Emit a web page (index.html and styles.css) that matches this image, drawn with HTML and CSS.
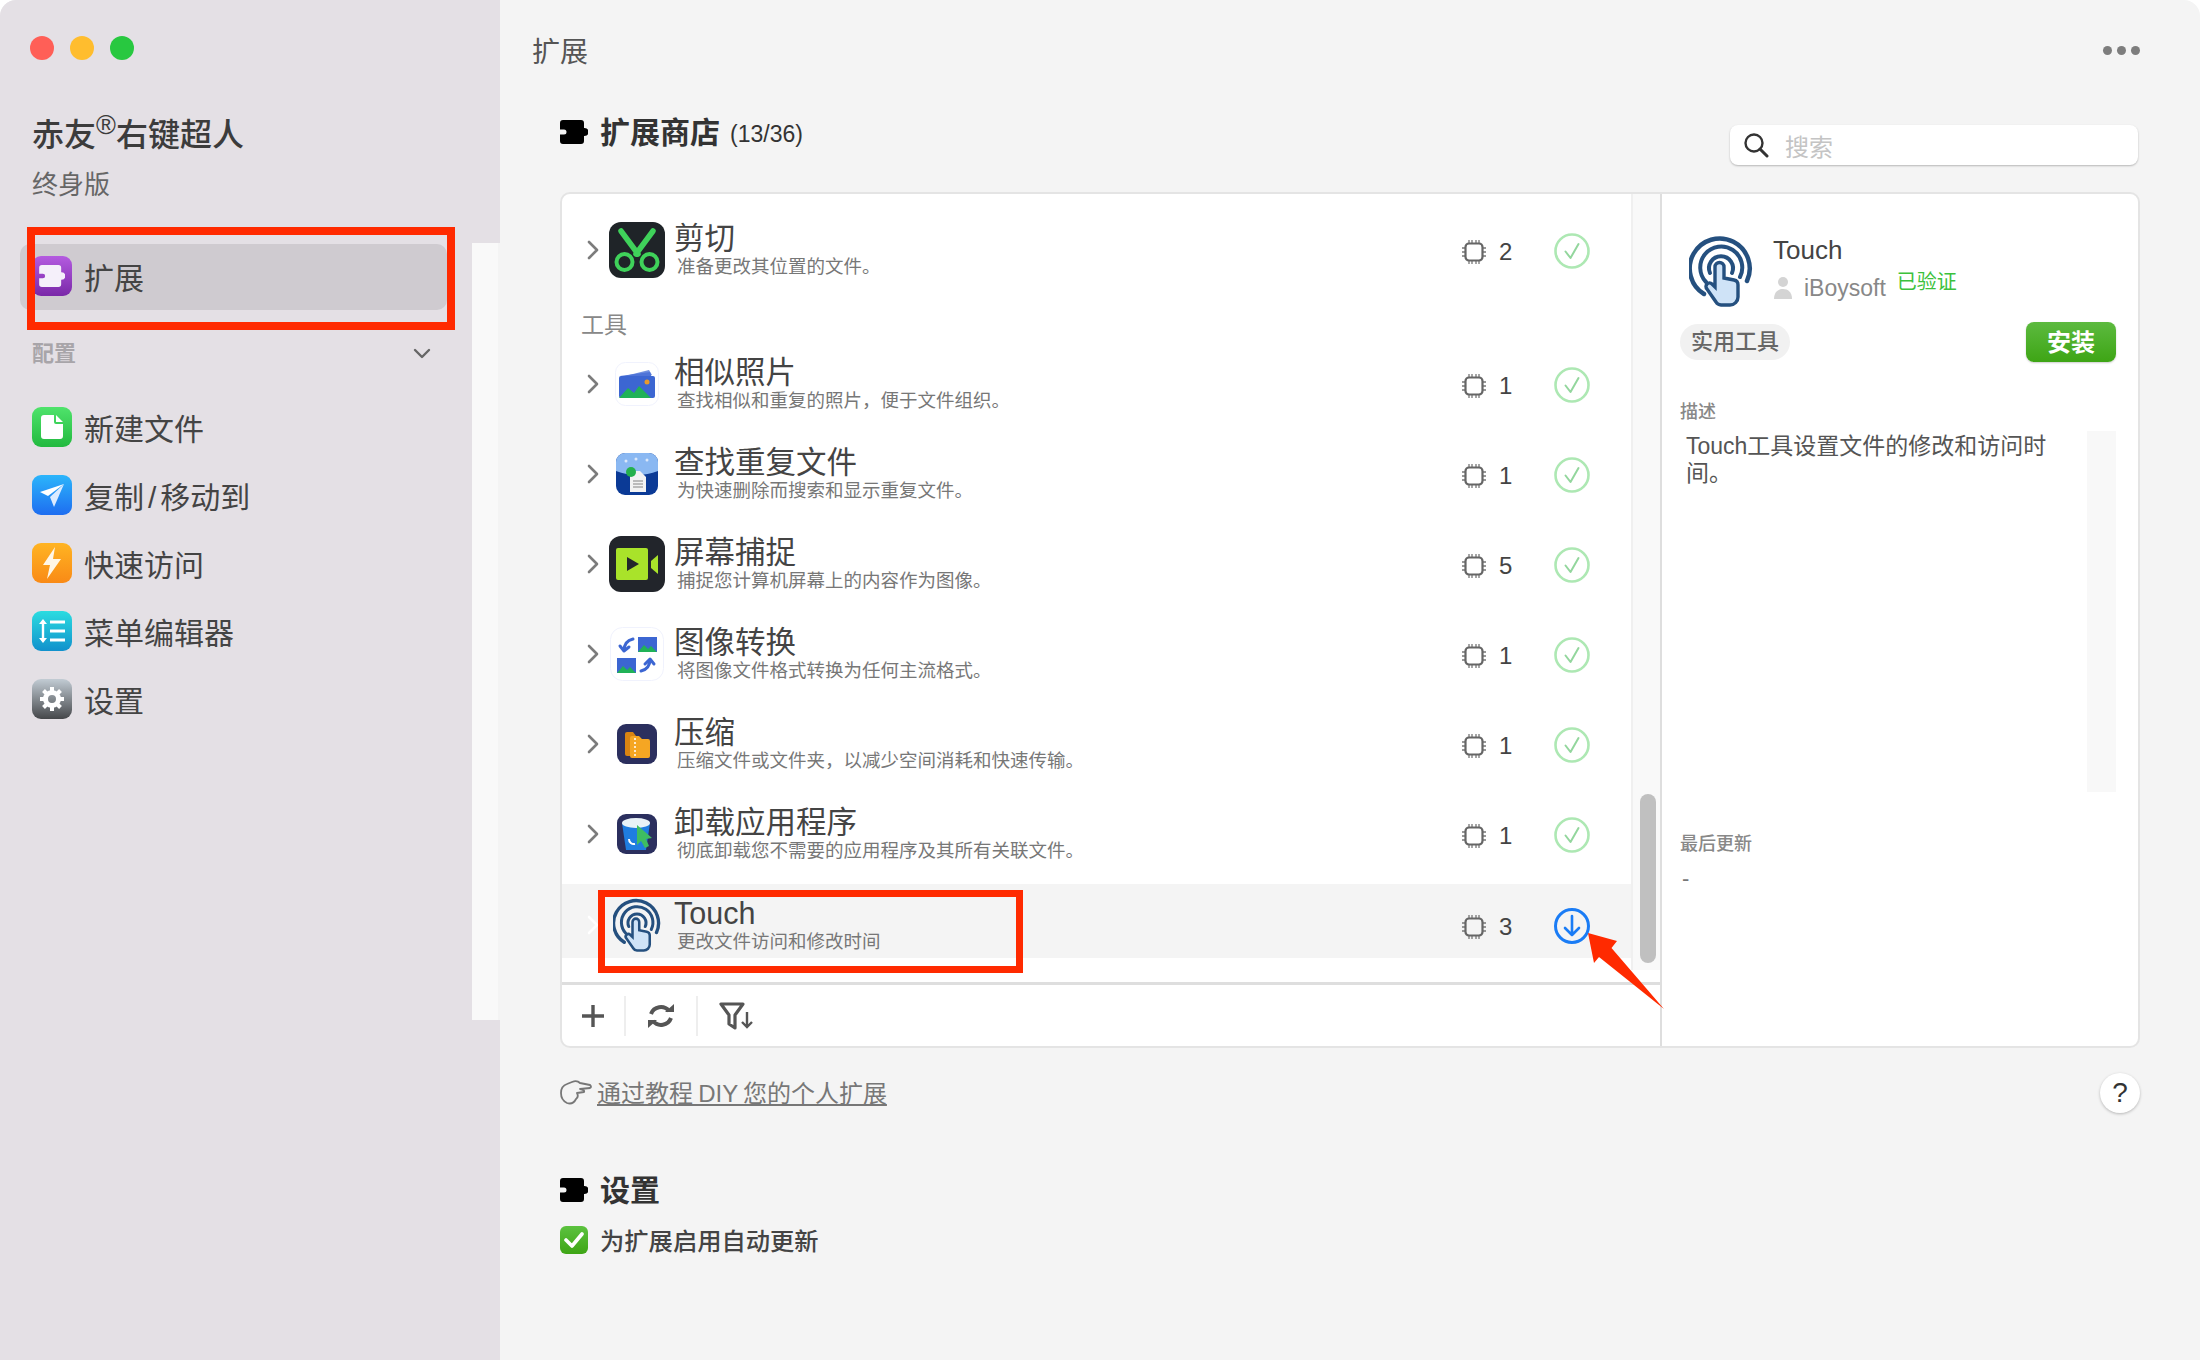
FILE: index.html
```html
<!DOCTYPE html>
<html>
<head>
<meta charset="utf-8">
<title>赤友右键超人</title>
<link rel="stylesheet" href="styles.css">
</head>
<body>

<svg class="sprite">
  <symbol id="puzzle" viewBox="0 0 28 24">
    <path d="M3 0H21a3 3 0 0 1 3 3V8h.5a4 4 0 0 1 0 8H24v5a3 3 0 0 1-3 3H3a3 3 0 0 1-3-3V14.500h4a2.500 2.500 0 0 0 0-5H0V3a3 3 0 0 1 3-3z"/>
  </symbol>
  <symbol id="chevron" viewBox="0 0 12 20">
    <path d="M2 2l8 8-8 8" fill="none" stroke="currentColor" stroke-width="2.600" stroke-linecap="round" stroke-linejoin="round"/>
  </symbol>
  <symbol id="chip" viewBox="0 0 24 24">
    <path d="M7 0v4M10 0v4M14 0v4M17 0v4M7 20v4M10 20v4M14 20v4M17 20v4M0 8h4M0 12h4M0 16h4M20 8h4M20 12h4M20 16h4" stroke="#777" stroke-width="1.300"/>
    <rect x="3.500" y="3.500" width="17" height="17" rx="3.500" fill="#fff" fill-opacity="0" stroke="#666" stroke-width="2.200"/>
  </symbol>
  <symbol id="done" viewBox="0 0 36 36">
    <circle cx="18" cy="18" r="16.500" fill="none" stroke="#ade8b3" stroke-width="2.600"/>
    <path d="M11.500 18.500l5 6.500 8-14" fill="none" stroke="#93d69d" stroke-width="2" stroke-linecap="round" stroke-linejoin="round"/>
  </symbol>
  <symbol id="touch" viewBox="0 0 64 72">
    <g fill="none" stroke="#25507f" stroke-linecap="round">
      <path d="M15 59A30 30 0 1 1 58 46" stroke-width="4.500"/>
      <path d="M17 47A21 21 0 1 1 51 42" stroke-width="4"/>
      <path d="M21 38A12 12 0 1 1 43 38" stroke-width="4"/>
    </g>
    <path d="M26 32a4.500 4.500 0 0 1 9 0V43l10 2a5 5 0 0 1 4 5V62a8 8 0 0 1-8 8H32a6 6 0 0 1-5-3L18 54a3.500 3.500 0 0 1 5-5l3 3z" fill="#cfe3f7" stroke="#25507f" stroke-width="3.400"/>
  </symbol>
</svg>

<div class="window">

  <aside class="sidebar">
    <div class="side-col">
      <div class="lights">
        <span class="light red"></span>
        <span class="light yellow"></span>
        <span class="light green"></span>
      </div>
      <h1 class="app-name">赤友<sup>®</sup>右键超人</h1>
      <div class="app-plan">终身版</div>

      <div class="nav-item active">
        <span class="tile tile-purple">
          <svg width="26" height="22" fill="#f5f0fa"><use href="#puzzle"/></svg>
        </span>
        扩展
      </div>

      <div class="nav-label">
        配置
        <svg width="18" height="12" viewBox="0 0 18 12"><path d="M2 2l7 7 7-7" fill="none" stroke="#666" stroke-width="2.400" stroke-linecap="round" stroke-linejoin="round"/></svg>
      </div>

      <nav class="nav-list">
        <div class="nav-item">
          <span class="tile tile-green">
            <svg width="22" height="24" viewBox="0 0 22 24"><path d="M3 0H13V7a2 2 0 0 0 2 2h7V21a3 3 0 0 1-3 3H3a3 3 0 0 1-3-3V3a3 3 0 0 1 3-3zM15 0l7 7h-7z" fill="#fff"/></svg>
          </span>
          新建文件
        </div>
        <div class="nav-item">
          <span class="tile tile-blue">
            <svg width="26" height="24" viewBox="0 0 26 24"><path d="M25 1L1 9l8 4z" fill="#fff"/><path d="M25 1L11 14l4 10z" fill="#dcebff"/></svg>
          </span>
          <span>复制<span class="slash">/</span>移动到</span>
        </div>
        <div class="nav-item">
          <span class="tile tile-orange">
            <svg width="20" height="32" viewBox="0 0 20 32"><path d="M13 0L1 18h7l-3 14L19 12h-8z" fill="#fff6e6"/></svg>
          </span>
          快速访问
        </div>
        <div class="nav-item">
          <span class="tile tile-teal">
            <svg width="28" height="28" viewBox="0 0 28 28"><path d="M5 2l4 5H1zM5 26l4-5H1z" fill="#fff"/><path d="M5 6v16" stroke="#fff" stroke-width="2.400"/><path d="M12 5h15M12 14h15M12 23h15" stroke="#fff" stroke-width="3"/></svg>
          </span>
          菜单编辑器
        </div>
        <div class="nav-item">
          <span class="tile tile-gray">
            <svg width="26" height="26" viewBox="0 0 26 26"><circle cx="13" cy="13" r="6.500" fill="none" stroke="#fff" stroke-width="5"/><path d="M13 1v5M13 20v5M1 13h5M20 13h5M4.500 4.500l3.500 3.500M18 18l3.500 3.500M21.500 4.500L18 8M8 18l-3.500 3.500" stroke="#fff" stroke-width="4"/></svg>
          </span>
          设置
        </div>
      </nav>
    </div>
    <div class="side-strip"></div>
  </aside>

  <main class="main">
    <header class="topbar">
      <span class="topbar-title">扩展</span>
      <span class="dots"><i></i><i></i><i></i></span>
    </header>

    <div class="content">
      <div class="store-head">
        <h2 class="heading">
          <svg width="28" height="24"><use href="#puzzle"/></svg>
          <span class="heading-text">扩展商店 <small>(13/36)</small></span>
        </h2>
        <div class="search">
          <svg width="26" height="26" viewBox="0 0 26 26"><circle cx="11" cy="11" r="8.500" fill="none" stroke="#333" stroke-width="2.400"/><path d="M17 17l7 7" stroke="#333" stroke-width="3" stroke-linecap="round"/></svg>
          <span>搜索</span>
        </div>
      </div>

      <section class="panel">
        <div class="panel-left">
          <div class="list-wrap">
            <div class="list">

              <div class="row">
                <svg class="chev" width="12" height="20"><use href="#chevron"/></svg>
                <span class="slot">
                  <svg width="56" height="56" viewBox="0 0 56 56">
                    <rect width="56" height="56" rx="12" fill="#1f2428"/>
                    <g fill="none" stroke="#3fd25a">
                      <circle cx="15.500" cy="40" r="8" stroke-width="4"/>
                      <circle cx="40.500" cy="40" r="8" stroke-width="4"/>
                      <path d="M12 9l17 23M44 9L27 32" stroke-width="5.500" stroke-linecap="round"/>
                    </g>
                  </svg>
                </span>
                <div class="row-text">
                  <div class="row-title">剪切</div>
                  <div class="row-sub">准备更改其位置的文件。</div>
                </div>
                <div class="row-count"><svg width="24" height="24"><use href="#chip"/></svg>2</div>
                <svg class="status" width="36" height="36"><use href="#done"/></svg>
              </div>

              <div class="group-label">工具</div>

              <div class="row">
                <svg class="chev" width="12" height="20"><use href="#chevron"/></svg>
                <span class="slot">
                  <svg width="44" height="44" viewBox="0 0 44 44">
                    <rect x=".5" y=".5" width="43" height="43" rx="10" fill="#fff" stroke="#f0f2fd"/>
                    <path d="M6 15l28-7 3 5z" fill="#6f8fe0"/>
                    <path d="M5 14l30-4 2 6z" fill="#4f74d8"/>
                    <rect x="4" y="14" width="36" height="22" rx="2" fill="#3c66d2"/>
                    <circle cx="32" cy="20" r="2.500" fill="#e89a2b"/>
                    <path d="M4 36l9-10 6 5 5-7 12 12z" fill="#20b257"/>
                  </svg>
                </span>
                <div class="row-text">
                  <div class="row-title">相似照片</div>
                  <div class="row-sub">查找相似和重复的照片，便于文件组织。</div>
                </div>
                <div class="row-count"><svg width="24" height="24"><use href="#chip"/></svg>1</div>
                <svg class="status" width="36" height="36"><use href="#done"/></svg>
              </div>

              <div class="row">
                <svg class="chev" width="12" height="20"><use href="#chevron"/></svg>
                <span class="slot">
                  <svg width="42" height="42" viewBox="0 0 42 42">
                    <rect width="42" height="42" rx="9" fill="#0b3a96"/>
                    <path d="M0 9a9 9 0 0 1 9-9H33a9 9 0 0 1 9 9V18q-21 8-42 0z" fill="#8ab8f2"/>
                    <path d="M14 18h10l6 6V39H14z" fill="#f2f2f2"/>
                    <path d="M17 28h10M17 31h10M17 34h10" stroke="#a9a9a9" stroke-width="1.500"/>
                    <circle cx="15" cy="19" r="5" fill="#24b14d"/>
                    <circle cx="10" cy="8" r="1.500" fill="#dbe8fa"/>
                    <circle cx="20" cy="6" r="1.500" fill="#dbe8fa"/>
                    <circle cx="31" cy="7" r="1.500" fill="#dbe8fa"/>
                  </svg>
                </span>
                <div class="row-text">
                  <div class="row-title">查找重复文件</div>
                  <div class="row-sub">为快速删除而搜索和显示重复文件。</div>
                </div>
                <div class="row-count"><svg width="24" height="24"><use href="#chip"/></svg>1</div>
                <svg class="status" width="36" height="36"><use href="#done"/></svg>
              </div>

              <div class="row">
                <svg class="chev" width="12" height="20"><use href="#chevron"/></svg>
                <span class="slot">
                  <svg width="56" height="56" viewBox="0 0 56 56">
                    <rect width="56" height="56" rx="12" fill="#22252b"/>
                    <rect x="7" y="12" width="32" height="32" rx="2" fill="#a9e32a"/>
                    <path d="M18 21l12 7-12 7z" fill="#22252b"/>
                    <path d="M42 25l7-6V38l-7-6z" fill="#a9e32a"/>
                  </svg>
                </span>
                <div class="row-text">
                  <div class="row-title">屏幕捕捉</div>
                  <div class="row-sub">捕捉您计算机屏幕上的内容作为图像。</div>
                </div>
                <div class="row-count"><svg width="24" height="24"><use href="#chip"/></svg>5</div>
                <svg class="status" width="36" height="36"><use href="#done"/></svg>
              </div>

              <div class="row">
                <svg class="chev" width="12" height="20"><use href="#chevron"/></svg>
                <span class="slot">
                  <svg width="54" height="54" viewBox="0 0 54 54">
                    <rect x=".5" y=".5" width="53" height="53" rx="12" fill="#fff" stroke="#f0f2fd"/>
                    <rect x="28" y="10" width="19" height="15" fill="#3c66d2"/>
                    <path d="M28 25l6-7 4 4 3-3 6 6z" fill="#20b257"/>
                    <rect x="7" y="31" width="19" height="15" fill="#3c66d2"/>
                    <path d="M7 46l6-7 4 4 3-3 6 6z" fill="#20b257"/>
                    <g fill="none" stroke="#3c66d2" stroke-width="3" stroke-linecap="round" stroke-linejoin="round">
                      <path d="M23 12q-9 2-9 12M10 19l4 5 5-4"/>
                      <path d="M31 44q9-2 9-12M35 37l5-5 4 5"/>
                    </g>
                  </svg>
                </span>
                <div class="row-text">
                  <div class="row-title">图像转换</div>
                  <div class="row-sub">将图像文件格式转换为任何主流格式。</div>
                </div>
                <div class="row-count"><svg width="24" height="24"><use href="#chip"/></svg>1</div>
                <svg class="status" width="36" height="36"><use href="#done"/></svg>
              </div>

              <div class="row">
                <svg class="chev" width="12" height="20"><use href="#chevron"/></svg>
                <span class="slot">
                  <svg width="40" height="40" viewBox="0 0 40 40">
                    <rect width="40" height="40" rx="9" fill="#2b2f5e"/>
                    <path d="M8 10a2 2 0 0 1 2-2h6l3 4v20H10a2 2 0 0 1-2-2z" fill="#d98412"/>
                    <path d="M13 14a2 2 0 0 1 2-2h7l3 3h6a2 2 0 0 1 2 2V32a2 2 0 0 1-2 2H15a2 2 0 0 1-2-2z" fill="#f5a623"/>
                    <path d="M18 14v18" stroke="#fff" stroke-width="1.500" stroke-dasharray="2 2"/>
                  </svg>
                </span>
                <div class="row-text">
                  <div class="row-title">压缩</div>
                  <div class="row-sub">压缩文件或文件夹，以减少空间消耗和快速传输。</div>
                </div>
                <div class="row-count"><svg width="24" height="24"><use href="#chip"/></svg>1</div>
                <svg class="status" width="36" height="36"><use href="#done"/></svg>
              </div>

              <div class="row">
                <svg class="chev" width="12" height="20"><use href="#chevron"/></svg>
                <span class="slot">
                  <svg width="40" height="40" viewBox="0 0 40 40">
                    <rect width="40" height="40" rx="9" fill="#2b2f5e"/>
                    <path d="M5 9h28l-4 27H9z" fill="#1f7de0"/>
                    <ellipse cx="19" cy="9" rx="14" ry="5" fill="#e9f2f7"/>
                    <path d="M20 11l15 13-6 1 3 7-4 2-4-7-4 4z" fill="#3ebd62"/>
                    <path d="M12 25a5 5 0 0 0 6 5" fill="none" stroke="#fff" stroke-width="2"/>
                  </svg>
                </span>
                <div class="row-text">
                  <div class="row-title">卸载应用程序</div>
                  <div class="row-sub">彻底卸载您不需要的应用程序及其所有关联文件。</div>
                </div>
                <div class="row-count"><svg width="24" height="24"><use href="#chip"/></svg>1</div>
                <svg class="status" width="36" height="36"><use href="#done"/></svg>
              </div>

              <div class="row selected">
                <svg class="chev" width="12" height="20"><use href="#chevron"/></svg>
                <span class="slot">
                  <svg width="48" height="54"><use href="#touch"/></svg>
                </span>
                <div class="row-text">
                  <div class="row-title">Touch</div>
                  <div class="row-sub">更改文件访问和修改时间</div>
                </div>
                <div class="row-count"><svg width="24" height="24"><use href="#chip"/></svg>3</div>
                <svg class="status" width="36" height="36" viewBox="0 0 36 36">
                  <circle cx="18" cy="18" r="16.500" fill="none" stroke="#1a7cf5" stroke-width="3"/>
                  <path d="M18 8V27M11 20l7 7 7-7" fill="none" stroke="#1a7cf5" stroke-width="2.600" stroke-linecap="round" stroke-linejoin="round"/>
                </svg>
              </div>

            </div>
            <div class="scroll-track"><div class="scroll-thumb"></div></div>
          </div>

          <div class="list-foot">
            <button class="tool">
              <svg width="26" height="26" viewBox="0 0 26 26"><path d="M13 2V24M2 13H24" stroke="#555" stroke-width="3.400"/></svg>
            </button>
            <button class="tool tool-mid">
              <svg width="30" height="28" viewBox="0 0 30 28">
                <g fill="none" stroke="#555" stroke-width="4"><path d="M5 12A10.500 10.500 0 0 1 23 9"/><path d="M25 16A10.500 10.500 0 0 1 7 19"/></g>
                <path d="M19 10h9V2zM11 18H2v8z" fill="#555"/>
              </svg>
            </button>
            <button class="tool tool-last">
              <svg width="36" height="28" viewBox="0 0 36 28">
                <path d="M2 2H24L16 13V26L10 22V13z" fill="none" stroke="#555" stroke-width="3.200" stroke-linejoin="round"/>
                <path d="M28 10V25M23 20l5 5 5-5" fill="none" stroke="#555" stroke-width="2.400"/>
              </svg>
            </button>
          </div>
        </div>

        <div class="details">
          <div class="det-head">
            <svg width="64" height="72"><use href="#touch"/></svg>
            <div>
              <div class="det-name">Touch</div>
              <div class="det-meta">
                <svg width="20" height="24" viewBox="0 0 20 24"><circle cx="10" cy="6" r="5" fill="#d4d4d4"/><path d="M1 23c0-7 4-10 9-10s9 3 9 10z" fill="#d4d4d4"/></svg>
                <span class="det-author">iBoysoft</span>
                <span class="det-verified">已验证</span>
              </div>
            </div>
          </div>
          <div class="det-actions">
            <span class="tag">实用工具</span>
            <button class="install">安装</button>
          </div>
          <div class="det-label first">描述</div>
          <div class="det-desc">
            <p>Touch工具设置文件的修改和访问时间。</p>
            <div class="desc-track"></div>
          </div>
          <div class="det-label last-update">最后更新</div>
          <div class="det-value">-</div>
        </div>
      </section>

      <div class="link-row">
        <svg width="32" height="26" viewBox="0 0 32 26" fill="none" stroke="#777" stroke-width="1.800" stroke-linecap="round" stroke-linejoin="round">
          <path d="M12 2Q17 0 20 3L30 5Q32 7 30 8L20 9Q25 10 24 12L17 13Q19 17 16 19Q13 25 7 23Q1 20 1 13Q1 6 7 4L12 2"/>
        </svg>
        <a class="tutorial" href="#">通过教程 DIY 您的个人扩展</a>
        <button class="help">?</button>
      </div>

      <h2 class="heading settings-head">
        <svg width="28" height="24"><use href="#puzzle"/></svg>
        <span class="heading-text">设置</span>
      </h2>
      <label class="auto-update">
        <span class="check">
          <svg width="20" height="18" viewBox="0 0 20 18"><path d="M2 9l6 6L18 3" fill="none" stroke="#fff" stroke-width="3.600" stroke-linecap="round" stroke-linejoin="round"/></svg>
        </span>
        <span class="auto-text">为扩展启用自动更新</span>
      </label>
    </div>
  </main>

  <!-- red annotations drawn on top of the screenshot -->
  <div class="mark mark-nav"></div>
  <div class="mark mark-touch"></div>
  <svg class="mark-arrow" width="90" height="90" viewBox="1580 925 90 90">
    <path d="M1588 933L1617 941 1611.500 948 1664 1009 1599 957 1594 963z" fill="#ff2a00"/>
  </svg>
</div>

</body>
</html>
```

FILE: styles.css
```css
* {
  box-sizing: border-box;
}

html, body {
  margin: 0;
  padding: 0;
  background: #fff;
}

body {
  font-family: "Liberation Sans", "Noto Sans CJK SC", sans-serif;
  color: #444;
}

h1, h2, p {
  margin: 0;
}

button {
  font-family: inherit;
  border: 0;
  padding: 0;
}

.sprite {
  position: absolute;
  width: 0;
  height: 0;
}

.window {
  position: relative;
  display: flex;
  width: 2200px;
  height: 1360px;
  overflow: hidden;
  border-radius: 16px 16px 0 0;
  background: #f4f4f4;
}

/* sidebar */
.sidebar {
  display: flex;
  width: 500px;
  background: #e4e0e5;
}

.side-col {
  width: 472px;
  padding: 36px 25px 0 20px;
}

.side-strip {
  width: 28px;
  height: 777px;
  margin-top: 243px;
  background: #f9f9f9;
  border-right: 2px solid #f4f4f4;
}

.lights {
  display: flex;
  gap: 16px;
  padding-left: 10px;
}

.light {
  width: 24px;
  height: 24px;
  border-radius: 50%;
}

.red { background: #ff5f57; }
.yellow { background: #ffbd2e; }
.green { background: #28c840; }

.app-name {
  margin: 55px 0 0 12px;
  font-size: 32px;
  line-height: 40px;
  font-weight: 500;
  color: #3c3c3c;
}

.app-name sup {
  font-size: 27px;
  line-height: 0;
  font-weight: 400;
}

.app-plan {
  margin: 14px 0 43px 12px;
  font-size: 26px;
  line-height: 32px;
  color: #666;
}

.nav-item {
  display: flex;
  align-items: center;
  gap: 12px;
  height: 68px;
  padding: 0 0 2px 12px;
  font-size: 30px;
  color: #444;
}

.nav-item.active {
  height: 66px;
  border-radius: 10px;
  background: #cfcbd0;
}

.slash {
  margin: 0 4px;
}

.nav-label {
  display: flex;
  align-items: center;
  justify-content: space-between;
  margin-top: 30px;
  padding: 0 16px 0 12px;
  font-size: 22px;
  line-height: 28px;
  font-weight: 700;
  color: #a8a5a9;
}

.nav-list {
  margin-top: 26px;
}

.tile {
  display: flex;
  align-items: center;
  justify-content: center;
  flex: none;
  width: 40px;
  height: 40px;
  border-radius: 9px;
}

.tile-purple { background: linear-gradient(#b45be0, #7a28a8); }
.tile-green { background: linear-gradient(#4fe36b, #22b93f); }
.tile-blue { background: linear-gradient(#2bb5fb, #1e6df0); }
.tile-orange { background: linear-gradient(#ffb422, #f98a16); }
.tile-teal { background: linear-gradient(#2bdce0, #1191cc); }
.tile-gray { background: linear-gradient(#c2ccd4, #45474a); }

/* main area */
.main {
  flex: 1;
  min-width: 0;
}

.topbar {
  display: flex;
  align-items: center;
  justify-content: space-between;
  height: 40px;
  margin-top: 32px;
  padding: 0 60px 4px 32px;
}

.topbar-title {
  font-size: 28px;
  color: #555;
}

.dots {
  display: flex;
  gap: 5px;
}

.dots i {
  width: 9px;
  height: 9px;
  border-radius: 50%;
  background: #7d7d7d;
}

.content {
  padding: 40px 60px 0;
}

.store-head {
  display: flex;
  justify-content: space-between;
  height: 53px;
}

.heading {
  display: flex;
  align-items: center;
  gap: 12px;
  height: 40px;
  font-size: 30px;
  font-weight: 700;
  color: #333;
}

.heading-text {
  display: flex;
  align-items: center;
  gap: 10px;
  margin-top: -4px;
}

.heading small {
  margin-top: 8px;
  font-size: 23px;
  font-weight: 400;
}

.search {
  display: flex;
  align-items: center;
  gap: 16px;
  width: 408px;
  height: 40px;
  margin: 13px 2px 0 0;
  padding-left: 13px;
  border-radius: 8px;
  background: #fff;
  box-shadow: 0 1px 2px rgba(0, 0, 0, 0.25);
  font-size: 24px;
  color: #c4c4c4;
}

.panel {
  display: flex;
  height: 856px;
  margin-top: 27px;
  border: 2px solid #e4e4e4;
  border-radius: 10px;
  background: #fff;
}

.panel-left {
  display: flex;
  flex-direction: column;
  width: 1100px;
  border-right: 2px solid #dedede;
}

.list-wrap {
  display: flex;
  height: 788px;
}

.list {
  flex: 1;
  padding-top: 19px;
}

.row {
  display: flex;
  align-items: center;
  height: 74px;
  margin-bottom: 16px;
  padding: 0 41px 0 25px;
  color: #777;
}

.row.selected {
  margin-top: -3px;
  padding-top: 8px;
  background: #f4f4f4;
}

.row.selected .chev {
  color: #fff;
}

.chev {
  flex: none;
  color: #7c7c7c;
}

.slot {
  display: flex;
  align-items: center;
  justify-content: center;
  flex: none;
  width: 56px;
  height: 56px;
  margin: 0 9px 0 10px;
}

.row-text {
  padding-bottom: 2px;
}

.row-title {
  font-size: 30.500px;
  line-height: 36px;
  color: #444;
}

.row-sub {
  padding-left: 3px;
  font-size: 18.500px;
  line-height: 22px;
  color: #777;
}

.row-count {
  display: flex;
  align-items: center;
  gap: 13px;
  width: 92px;
  margin: 3px 0 0 auto;
  font-size: 24px;
  color: #444;
}

.status {
  flex: none;
  margin-top: 2px;
}

.group-label {
  margin: 24px 0 8px 19px;
  font-size: 23px;
  line-height: 28px;
  color: #888;
}

.scroll-track {
  width: 29px;
  height: 776px;
  padding: 600px 0 0 7px;
  border-left: 2px solid #f0f0f0;
  background: #f9f9f9;
}

.scroll-thumb {
  width: 16px;
  height: 169px;
  border-radius: 8px;
  background: #c0c0c0;
}

.list-foot {
  display: flex;
  align-items: center;
  flex: 1;
  border-top: 3px solid #dedede;
}

.tool {
  display: flex;
  align-items: center;
  justify-content: center;
  width: 64px;
  height: 40px;
  border-right: 2px solid #eeeeee;
  background: none;
}

.tool-mid {
  width: 72px;
}

.tool-last {
  width: 78px;
  border-right: 0;
}

/* details column */
.details {
  flex: 1;
  min-width: 0;
  padding: 41px 22px 0 18px;
}

.det-head {
  display: flex;
  gap: 20px;
  height: 72px;
  padding-left: 9px;
}

.det-name {
  margin-top: -1px;
  font-size: 26px;
  line-height: 32px;
  color: #444;
}

.det-meta {
  display: flex;
  align-items: center;
  height: 30px;
  margin-top: 7px;
}

.det-author {
  margin-left: 11px;
  font-size: 23px;
  color: #888;
}

.det-verified {
  margin: -16px 0 0 11px;
  font-size: 20px;
  color: #3cc13c;
}

.det-actions {
  display: flex;
  align-items: center;
  justify-content: space-between;
  height: 40px;
  margin-top: 15px;
}

.tag {
  padding: 0 11px;
  border-radius: 18px;
  background: #f1f1f1;
  font-size: 22px;
  line-height: 36px;
  font-weight: 500;
  color: #666;
}

.install {
  width: 90px;
  height: 40px;
  padding-bottom: 3px;
  border-radius: 8px;
  background: linear-gradient(#5cba3f, #3ea515);
  box-shadow: 0 1px 2px rgba(0, 0, 0, 0.2);
  font-size: 24px;
  font-weight: 700;
  color: #fff;
}

.det-label {
  font-size: 18px;
  line-height: 24px;
  font-weight: 500;
  color: #888;
}

.det-label.first {
  margin-top: 38px;
}

.det-label.last-update {
  margin-top: 40px;
}

.det-desc {
  display: flex;
  height: 361px;
  margin-top: 7px;
}

.det-desc p {
  flex: 1;
  padding: 2px 34px 0 6px;
  font-size: 23px;
  line-height: 27px;
  color: #555;
}

.desc-track {
  width: 29px;
  background: #f8f8f8;
}

.det-value {
  margin-top: 11px;
  padding-left: 2px;
  font-size: 22px;
  line-height: 24px;
  color: #777;
}

/* below the panel */
.link-row {
  display: flex;
  align-items: center;
  gap: 5px;
  height: 40px;
  margin-top: 25px;
}

.tutorial {
  margin-top: -4px;
  font-size: 24px;
  word-spacing: -1.500px;
  color: #777;
}

.help {
  width: 40px;
  height: 40px;
  margin-left: auto;
  border-radius: 50%;
  background: #fff;
  box-shadow: 0 1px 3px rgba(0, 0, 0, 0.25);
  font-size: 28px;
  color: #333;
}

.settings-head {
  margin-top: 57px;
}

.auto-update {
  display: flex;
  align-items: center;
  gap: 12px;
  height: 28px;
  margin-top: 16px;
  font-size: 24.300px;
  font-weight: 500;
  color: #444;
}

.auto-text {
  margin-top: -2px;
}

.check {
  display: flex;
  align-items: center;
  justify-content: center;
  width: 28px;
  height: 28px;
  border-radius: 6px;
  background: linear-gradient(#5cc23f, #3ea515);
}

/* annotations */
.mark {
  position: absolute;
  border: 8px solid #ff2a00;
}

.mark-nav {
  left: 27px;
  top: 227px;
  width: 428px;
  height: 103px;
}

.mark-touch {
  left: 598px;
  top: 890px;
  width: 425px;
  height: 83px;
  border-width: 7px;
}

.mark-arrow {
  position: absolute;
  left: 1580px;
  top: 925px;
}
```
